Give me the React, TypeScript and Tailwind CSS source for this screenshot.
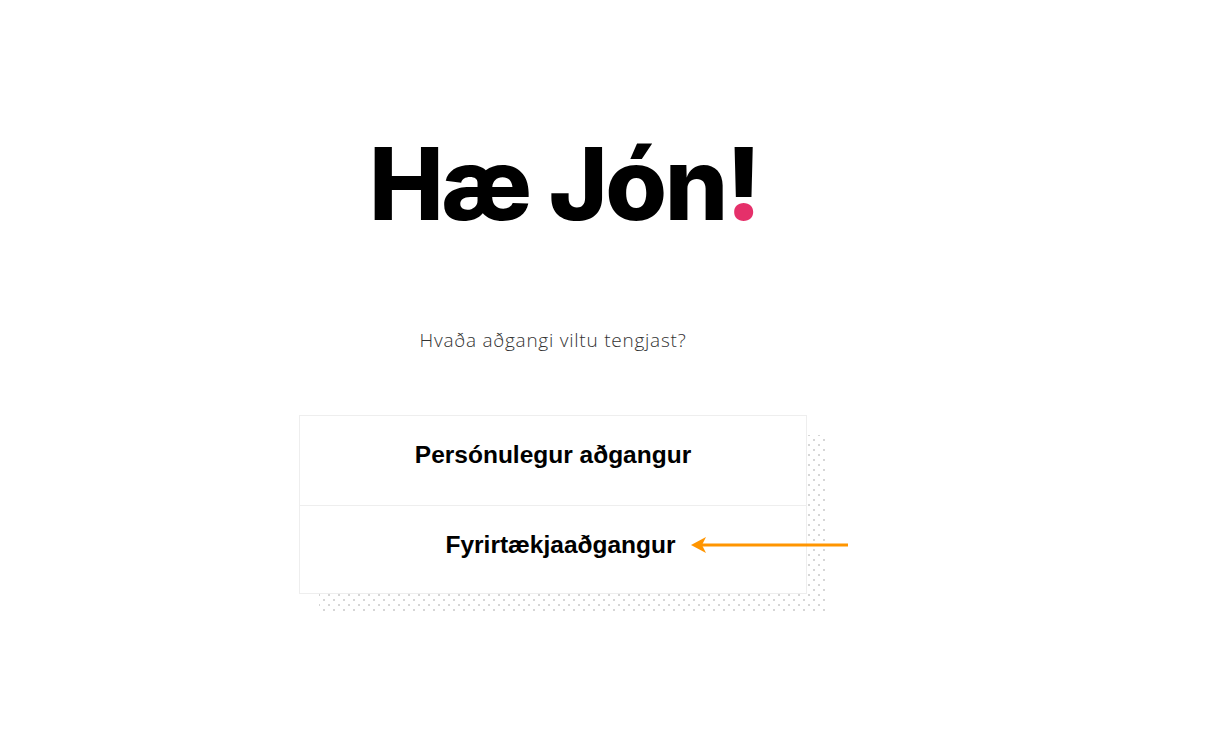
const dots =
  "[background-image:radial-gradient(circle,#d6d6d6_0.9px,transparent_1.1px),radial-gradient(circle,#d6d6d6_0.9px,transparent_1.1px)] [background-size:10px_10px] [background-position:0_0,5px_5px]";

export default function App() {
  return (
    <div className="min-h-[752px] w-full bg-white">
      <div className="ml-[299px] flex w-[508px] flex-col items-center pt-[134px]">
        <h1
          className="ml-[22px] text-[100px] font-extrabold leading-none tracking-[-0.025em] text-black"
          style={{ fontFamily: "Inter, 'Liberation Sans', sans-serif" }}
        >
          Hæ Jón
          <span className="inline-block bg-[linear-gradient(to_bottom,#000_63.5%,#e5306a_63.5%)] bg-clip-text text-transparent">
            !
          </span>
        </h1>

        <p className="mt-[94px] text-[19px] leading-[24px] font-light tracking-[0.04em] text-[#333] [font-family:'Open_Sans',Lato,sans-serif]">
          Hvaða aðgangi viltu tengjast?
        </p>

        <div className="relative mt-[63px] w-[508px]">
          <div className={`absolute left-[20px] top-[20px] h-full w-full ${dots}`} />
          <div className="relative border border-[#eeeeee] bg-white [font-family:'Liberation_Sans',Arial,sans-serif]">
            <button className="flex h-[89px] w-full items-center justify-center pb-[10px] text-[24.5px] font-bold text-black">
              Persónulegur aðgangur
            </button>
            <button className="flex h-[88px] w-full items-center justify-center border-t border-[#eeeeee] pb-[8px] pl-[15px] text-[24.5px] font-bold text-black">
              Fyrirtækjaaðgangur
            </button>
          </div>
          <svg
            className="absolute left-[390px] top-[120px]"
            width="160"
            height="20"
            viewBox="0 0 160 20"
          >
            <line x1="12" y1="10" x2="159" y2="10" stroke="#ff9500" strokeWidth="3" />
            <polygon points="2,10 17,2 13,10 17,18" fill="#ff9500" />
          </svg>
        </div>
      </div>
    </div>
  );
}
